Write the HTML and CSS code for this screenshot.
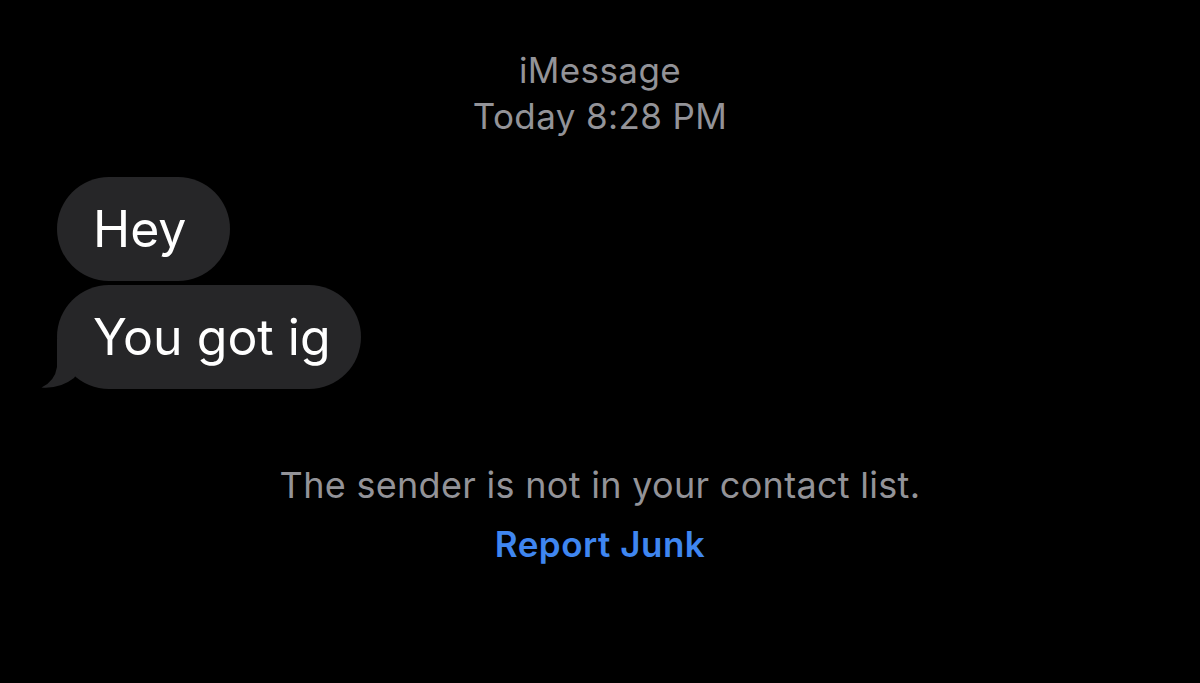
FILE: index.html
```html
<!DOCTYPE html>
<html lang="en">
<head>
<meta charset="utf-8">
<title>iMessage</title>
<link rel="stylesheet" href="styles.css">
</head>
<body>
<main class="thread">
  <header class="meta">
    <div class="meta-line">iMessage</div>
    <div class="meta-line">Today 8:28 PM</div>
  </header>
  <section class="messages">
    <div class="bubble bubble-short">Hey</div>
    <div class="bubble bubble-tail">You got ig
      <svg class="tail" width="40" height="50" viewBox="0 0 40 50" aria-hidden="true">
        <path d="M17,0 L17,28 Q15,42 1.5,48.5 Q20,50 34,39 L40,30 L40,0 Z" fill="#262628"/>
      </svg>
    </div>
  </section>
  <footer class="notice">
    <div class="notice-text">The sender is not in your contact list.</div>
    <a class="report" href="#">Report Junk</a>
  </footer>
</main>
</body>
</html>
```

FILE: styles.css
```css
html, body {
  margin: 0;
  padding: 0;
  background: #000;
}
body {
  width: 1200px;
  height: 683px;
  overflow: hidden;
  font-family: "Inter", "Noto Sans", sans-serif;
  -webkit-font-smoothing: antialiased;
}
.thread {
  display: flex;
  flex-direction: column;
}
.meta {
  padding-top: 47px;
  display: flex;
  flex-direction: column;
  align-items: center;
  color: #939398;
  font-size: 35px;
  line-height: 46px;
  letter-spacing: 0.4px;
}
.messages {
  margin-top: 38px;
  padding-left: 57px;
  display: flex;
  flex-direction: column;
  align-items: flex-start;
  gap: 4px;
}
.bubble {
  position: relative;
  background: #262628;
  color: #fff;
  font-size: 50px;
  line-height: 104px;
  height: 104px;
  padding: 0 30px 0 36px;
  border-radius: 52px;
  letter-spacing: 0;
}
.bubble-short {
  padding-right: 44px;
}
.tail {
  position: absolute;
  left: -17px;
  bottom: 0;
  display: block;
}
.notice {
  margin-top: 72px;
  display: flex;
  flex-direction: column;
  align-items: center;
}
.notice-text {
  color: #939398;
  font-size: 36px;
  line-height: 48px;
  letter-spacing: 0.3px;
}
.report {
  margin-top: 12px;
  color: #3f86f0;
  font-size: 35px;
  line-height: 46px;
  font-weight: 600;
  text-decoration: none;
  letter-spacing: 0.5px;
}
```
